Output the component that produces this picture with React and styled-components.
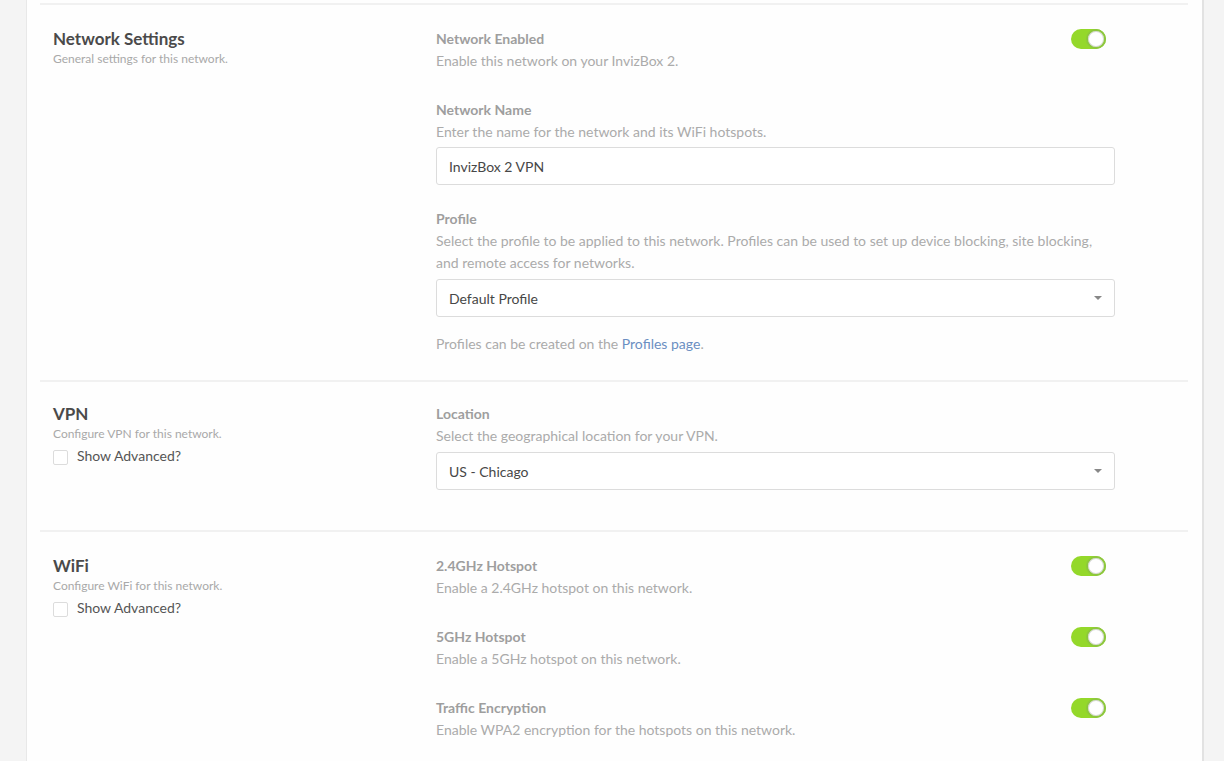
import React from "react";
import styled, { createGlobalStyle } from "styled-components";

const Global = createGlobalStyle`
  html, body { margin: 0; padding: 0; background: #f4f4f4; }
  body { font-family: Lato, "Open Sans", sans-serif; -webkit-font-smoothing: antialiased; }
  * { box-sizing: border-box; }
`;

const Page = styled.div`
  height: 761px;
  overflow: hidden;
  display: flex;
`;

const Card = styled.div`
  margin-left: 26px;
  width: 1178px;
  background: #fefefe;
  border-left: 1px solid #e8e8e8;
  border-right: 2px solid #e2e2e2;
  padding: 3px 14px 0 13px;
`;

const Section = styled.section`
  border-top: 2px solid #f1f1f1;
  display: grid;
  grid-template-columns: 383px 679px;
  padding: ${(p) => p.$pad || "22px 0 24px 13px"};
`;

const Side = styled.div`
  display: flex;
  flex-direction: column;
`;

const Heading = styled.h2`
  margin: 0;
  font-size: 17px;
  font-weight: 700;
  color: #4a4a4a;
  line-height: 22px;
`;

const Sub = styled.p`
  margin: 0;
  font-size: 12px;
  color: #a9a9a9;
  line-height: 18px;
`;

const Check = styled.label`
  display: flex;
  align-items: center;
  gap: 9px;
  margin-top: 3px;
  font-size: 14px;
  color: #555;
  line-height: 20px;
`;

const Box = styled.span`
  width: 15px;
  height: 15px;
  border: 1px solid #dcdcdc;
  border-radius: 2px;
  background: #fff;
  margin-top: 3px;
`;

const Fields = styled.div`
  display: flex;
  flex-direction: column;
`;

const Field = styled.div`
  display: flex;
  flex-direction: column;
  margin-bottom: ${(p) => p.$mb ?? 27}px;
  &:last-child { margin-bottom: ${(p) => p.$mb ?? 0}px; }
`;

const LabelRow = styled.div`
  display: flex;
  justify-content: space-between;
  align-items: center;
  padding-right: 9px;
`;

const Label = styled.div`
  font-size: 14px;
  font-weight: 700;
  color: #9e9e9e;
  line-height: 22px;
`;

const Desc = styled.div`
  font-size: 14px;
  color: #ababab;
  line-height: 22px;
`;

const Toggle = styled.span`
  position: relative;
  width: 35px;
  height: 20px;
  border-radius: 10px;
  background: #94d82a;
  &::after {
    content: "";
    position: absolute;
    right: 0;
    top: 0;
    width: 20px;
    height: 20px;
    border-radius: 50%;
    background: #fff;
    box-sizing: border-box;
    border: 2px solid #8dc63f;
    box-shadow: inset 0 0 0 1px #d8d8d8;
  }
`;

const Input = styled.div`
  margin-top: ${(p) => p.$mt ?? 5}px;
  height: 38px;
  border: 1px solid #dcdcdc;
  border-radius: 3px;
  padding: 0 12px;
  display: flex;
  align-items: center;
  justify-content: space-between;
  font-size: 14px;
  color: #474747;
  background: #fff;
`;

const Caret = styled.span`
  width: 0;
  height: 0;
  border-left: 4px solid transparent;
  border-right: 4px solid transparent;
  border-top: 4px solid #888;
`;

const Note = styled.div`
  margin-top: 16px;
  font-size: 14px;
  color: #ababab;
  line-height: 22px;
`;

const Link = styled.a`
  color: #6b8fc2;
  text-decoration: none;
`;

export default function App() {
  return (
    <>
      <Global />
      <Page>
        <Card>
          <Section $pad="23px 0 25px 13px">
            <Side>
              <Heading>Network Settings</Heading>
              <Sub>General settings for this network.</Sub>
            </Side>
            <Fields>
              <Field>
                <LabelRow>
                  <Label>Network Enabled</Label>
                  <Toggle />
                </LabelRow>
                <Desc>Enable this network on your InvizBox 2.</Desc>
              </Field>
              <Field $mb={23}>
                <Label>Network Name</Label>
                <Desc>Enter the name for the network and its WiFi hotspots.</Desc>
                <Input $mt={4}>InvizBox 2 VPN</Input>
              </Field>
              <Field>
                <Label>Profile</Label>
                <Desc>
                  Select the profile to be applied to this network. Profiles can be used to set up device blocking, site blocking,
                  and remote access for networks.
                </Desc>
                <Input>
                  Default Profile
                  <Caret />
                </Input>
                <Note>
                  Profiles can be created on the <Link>Profiles page</Link>.
                </Note>
              </Field>
            </Fields>
          </Section>
          <Section $pad="21px 0 40px 13px">
            <Side>
              <Heading>VPN</Heading>
              <Sub>Configure VPN for this network.</Sub>
              <Check>
                <Box />
                Show Advanced?
              </Check>
            </Side>
            <Fields>
              <Field>
                <Label>Location</Label>
                <Desc>Select the geographical location for your VPN.</Desc>
                <Input>
                  US - Chicago
                  <Caret />
                </Input>
              </Field>
            </Fields>
          </Section>
          <Section $pad="23px 0 24px 13px">
            <Side>
              <Heading>WiFi</Heading>
              <Sub>Configure WiFi for this network.</Sub>
              <Check>
                <Box />
                Show Advanced?
              </Check>
            </Side>
            <Fields>
              <Field>
                <LabelRow>
                  <Label>2.4GHz Hotspot</Label>
                  <Toggle />
                </LabelRow>
                <Desc>Enable a 2.4GHz hotspot on this network.</Desc>
              </Field>
              <Field>
                <LabelRow>
                  <Label>5GHz Hotspot</Label>
                  <Toggle />
                </LabelRow>
                <Desc>Enable a 5GHz hotspot on this network.</Desc>
              </Field>
              <Field>
                <LabelRow>
                  <Label>Traffic Encryption</Label>
                  <Toggle />
                </LabelRow>
                <Desc>Enable WPA2 encryption for the hotspots on this network.</Desc>
              </Field>
            </Fields>
          </Section>
        </Card>
      </Page>
    </>
  );
}
